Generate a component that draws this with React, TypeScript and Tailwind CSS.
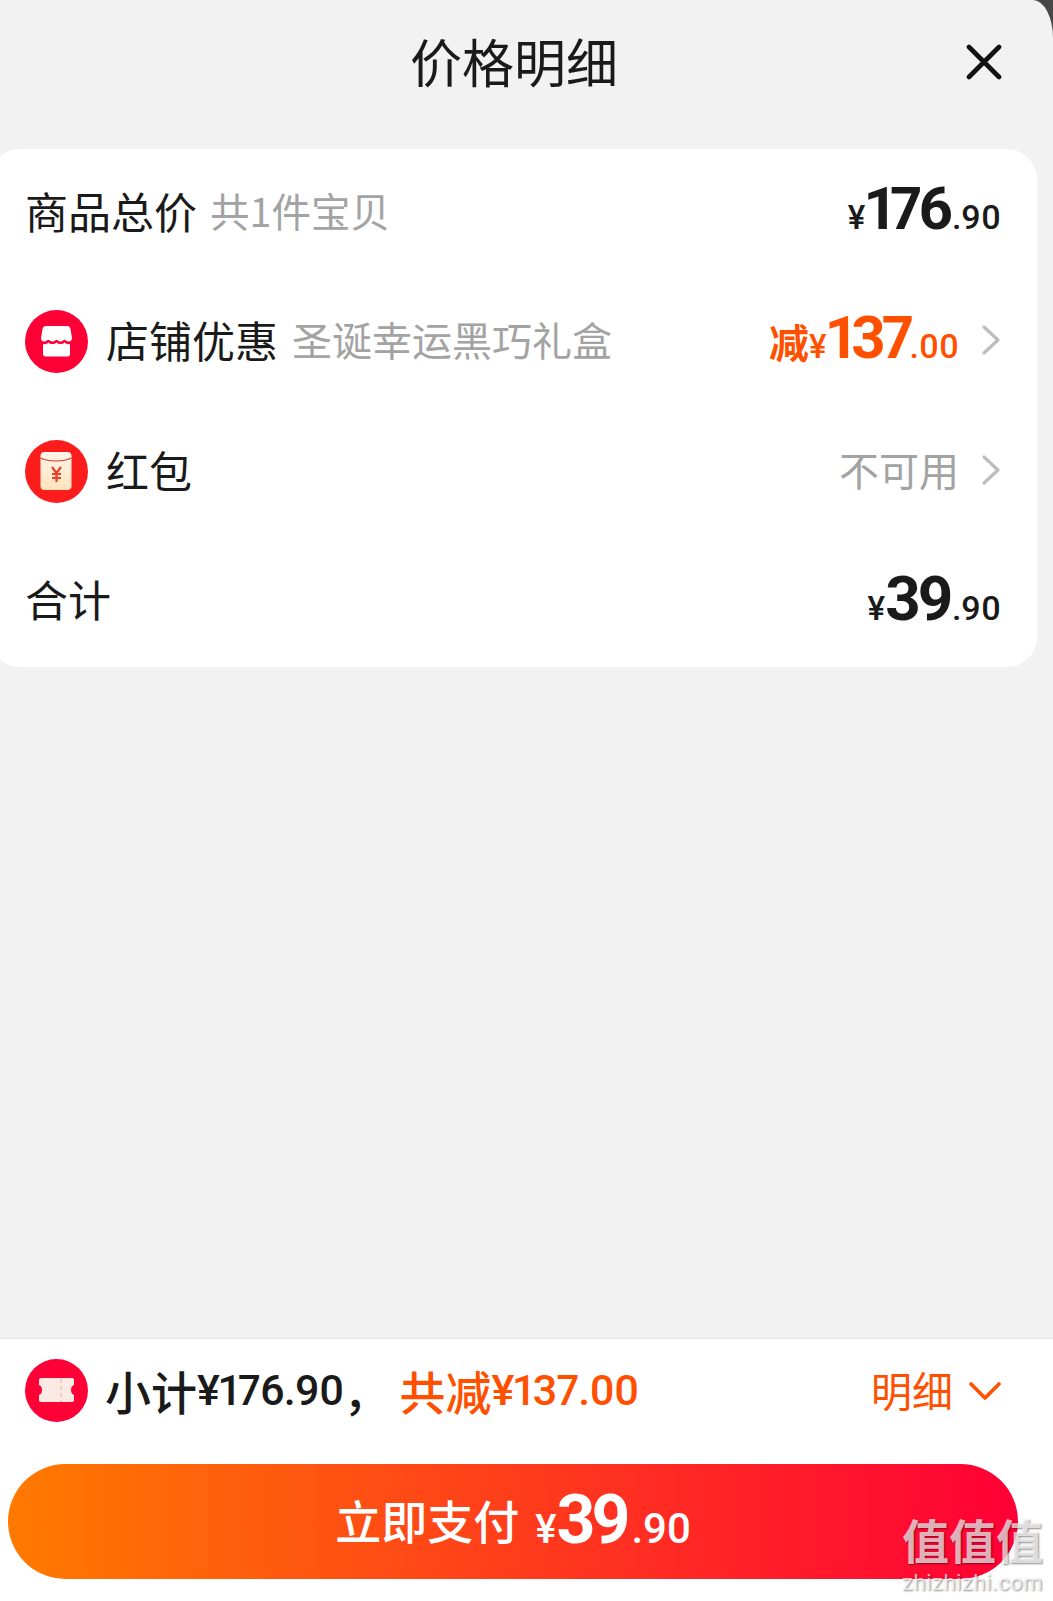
const cjk = "font-['Noto_Sans_CJK_SC','Noto_Sans',sans-serif]";

function Price({
  value,
  cents,
  color,
  prefix,
  tight,
  className,
}: {
  value: string;
  cents: string;
  color: string;
  prefix?: string;
  tight?: boolean;
  className?: string;
}) {
  return (
    <span className={`flex items-baseline proportional-nums ${color} ${className ?? "pb-[7px]"}`}>
      {prefix && <span className="text-[40px] font-bold leading-none">{prefix}</span>}
      <span className="text-[33px] font-medium leading-none font-['Roboto',sans-serif]">¥</span>
      <span
        className={`font-bold leading-none font-['Roboto',sans-serif] ${
          tight ? "text-[60px] tracking-[-4px]" : "text-[62px] tracking-[-3px]"
        }`}
      >
        {value}
      </span>
      <span className={`text-[34px] font-medium leading-none font-['Roboto',sans-serif] ${prefix ? "ml-0" : tight ? "ml-[3px]" : "ml-[1px]"}`}>
        .{cents}
      </span>
    </span>
  );
}

function Chevron() {
  return (
    <svg className="mb-[3px] ml-[22px] h-[32px] w-[20px]" viewBox="0 0 20 32" fill="none">
      <path d="M3 3l14 13L3 29" stroke="#bdbdbd" strokeWidth="3.2" strokeLinecap="round" strokeLinejoin="round" />
    </svg>
  );
}

function ShopIcon() {
  return (
    <svg className="h-[63px] w-[63px] shrink-0" viewBox="0 0 63 63">
      <circle cx="31.5" cy="31.5" r="31.5" fill="#ff0036" />
      <path d="M21 16h21c2 0 3 1 3.500 3L47 28c0 2.500-1.500 3.500-3.300 3.500-2.200 0-3-1.800-4.200-1.800s-2 1.800-4 1.800-3-1.800-4-1.800-2 1.800-4 1.800-3-1.800-4.200-1.800-2 1.800-4.200 1.800C17.500 31.500 16 30.500 16 28l1.500-9c.5-2 1.500-3 3.500-3z" fill="#fff" />
      <path d="M18 34c2 .5 4 0 5.300-1.500 2.500 2 5.700 2 8.200 0 2.500 2 5.700 2 8.200 0 1.300 1.500 3.300 2 5.300 1.500V44c0 1.500-1 2.500-2.500 2.500h-22C19 46.500 18 45.500 18 44z" fill="#fff" />
    </svg>
  );
}

function PacketIcon() {
  return (
    <svg className="h-[63px] w-[63px] shrink-0" viewBox="0 0 63 63">
      <defs>
        <linearGradient id="packet" x1="0" y1="0" x2="0" y2="1">
          <stop offset="0" stopColor="#fff6ea" />
          <stop offset="1" stopColor="#ffe3bb" />
        </linearGradient>
      </defs>
      <circle cx="31.5" cy="31.5" r="31.5" fill="#fb1c1c" />
      <rect x="15.500" y="12" width="31" height="38" rx="4" fill="url(#packet)" />
      <path d="M15.500 18c8 4 23 4 31 0" stroke="#e8352b" strokeWidth="1.2" fill="none" />
      <path d="M27 27l4.500 6 4.500-6M31.500 33v9M27 34h9M27 38h9" stroke="#ec3d2c" strokeWidth="2.200" fill="none" />
    </svg>
  );
}

function TicketIcon() {
  return (
    <svg className="h-[63px] w-[63px] shrink-0" viewBox="0 0 63 63">
      <circle cx="31.5" cy="31.5" r="31.5" fill="#ff0036" />
      <path d="M16 19h31c1.500 0 2 1 2 2v5c-4 1-4 9 0 10v5c0 1-.5 2-2 2H16c-1.500 0-2-1-2-2v-5c4-1 4-9 0-10v-5c0-1 .5-2 2-2z" fill="#fbeae3" />
      <path d="M36 20v23" stroke="#f3c4b6" strokeWidth="1.500" strokeDasharray="4 3" />
    </svg>
  );
}

function Row({ children }: { children: React.ReactNode }) {
  return <div className="flex h-[129.5px] items-center justify-between pb-[3px] pl-[25px] pr-[36px]">{children}</div>;
}

export default function App() {
  return (
    <div className={`h-[1601px] w-[1053px] overflow-hidden bg-[#484848] ${cjk}`}>
      <div className="relative flex h-full flex-col rounded-tr-[20px_38px] bg-[#f2f2f2]">
        <div className="relative flex h-[149px] shrink-0 justify-center pr-[25px] pt-[23px]">
          <span className="text-[52px] leading-[76px] text-[#1a1a1a]">价格明细</span>
          <svg className="absolute left-[966px] top-[44px] h-[36px] w-[36px]" viewBox="0 0 36 36" fill="none">
            <path d="M3 3l30 30M33 3L3 33" stroke="#111" strokeWidth="4.6" strokeLinecap="round" />
          </svg>
        </div>

        <div className="ml-[-10px] w-[1047px] rounded-[30px] bg-white pl-[10px] text-[43px] text-[#1a1a1a]">
          <Row>
            <span className="flex items-center pb-[5px]">
              商品总价
              <span className="ml-[13px] text-[39.5px] text-[#a3a3a3]">共1件宝贝</span>
            </span>
            <Price value="176" cents="90" color="text-[#1a1a1a]" tight />
          </Row>
          <Row>
            <span className="flex items-center">
              <ShopIcon />
              <span className="ml-[18px] pb-[5px]">店铺优惠</span>
              <span className="ml-[14px] pb-[5px] text-[40px] text-[#a3a3a3]">圣诞幸运黑巧礼盒</span>
            </span>
            <span className="flex items-center">
              <Price prefix="减" value="137" cents="00" color="text-[#ff5000]" tight />
              <Chevron />
            </span>
          </Row>
          <Row>
            <span className="flex items-center">
              <PacketIcon />
              <span className="ml-[18px] pb-[5px]">红包</span>
            </span>
            <span className="flex items-center text-[40px] text-[#a3a3a3]">
              <span className="pb-[5px]">不可用</span>
              <Chevron />
            </span>
          </Row>
          <Row>
            <span className="pb-[5px]">合计</span>
            <Price value="39" cents="90" color="text-[#1a1a1a]" className="pb-[4px]" />
          </Row>
        </div>

        <div className="mt-auto shrink-0 border-t border-[#e6e6e6] bg-white">
          <div className="flex h-[125px] items-center justify-between pb-[23px] pl-[25px] pr-[52px]">
            <span className="flex items-center text-[46px] font-medium text-[#1a1a1a]">
              <TicketIcon />
              <span className="ml-[17px]">小计</span>
              <span className="text-[43px] tracking-[-0.8px] proportional-nums font-['Roboto',sans-serif]">¥176.90</span>
              <span>，</span>
              <span className="ml-[10px] text-[#ff5000]">共减</span>
              <span className="text-[43px] tracking-[-0.7px] text-[#ff5000] proportional-nums font-['Roboto',sans-serif]">¥137.00</span>
            </span>
            <span className="flex items-center text-[41px] text-[#ff5000]">
              明细
              <svg className="ml-[16px] mt-[3px] h-[24px] w-[32px]" viewBox="0 0 32 24" fill="none">
                <path d="M2 4l14 14L30 4" stroke="#ff5000" strokeWidth="3.6" strokeLinecap="round" strokeLinejoin="round" />
              </svg>
            </span>
          </div>
          <div className="h-[137px] pl-[8px]">
            <div className="flex h-[115px] w-[1010px] items-center justify-center rounded-full bg-linear-to-r/srgb from-[#ff7a00] to-[#ff0036] pb-[4px] text-white">
              <span className="text-[46px] font-medium">立即支付</span>
              <span className="ml-[16px] flex items-baseline font-['Roboto',sans-serif]">
                <span className="text-[40px] font-medium leading-none">¥</span>
                <span className="text-[68px] font-bold leading-none tracking-[-4px]">39</span>
                <span className="ml-[5px] text-[42px] font-medium leading-none">.90</span>
              </span>
            </div>
          </div>
        </div>

        {/* site watermark */}
        <div className="pointer-events-none absolute left-[902px] top-[1514px] flex flex-col items-center gap-[7px] text-white/70 [text-shadow:1px_1px_2px_rgba(0,0,0,0.45)]">
          <span className="text-[47px] font-bold leading-[50px]">值值值</span>
          <span className="font-['Roboto',sans-serif] text-[22px] leading-[24px] tracking-[0.5px]">zhizhizhi.com</span>
        </div>
      </div>
    </div>
  );
}
